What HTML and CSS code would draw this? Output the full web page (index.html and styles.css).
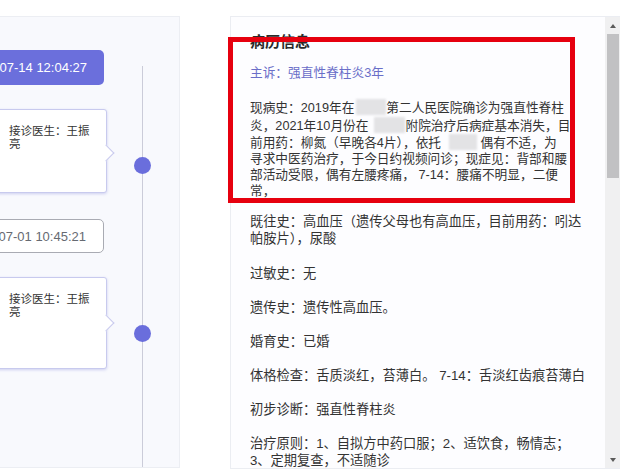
FILE: index.html
```html
<!DOCTYPE html>
<html lang="zh-CN">
<head>
<meta charset="utf-8">
<title>病历信息</title>
<link rel="stylesheet" href="styles.css">
</head>
<body>
<div class="page">
  <aside class="timeline-panel">
    <div class="events">
      <div class="pill pill-active">2021-07-14 12:04:27</div>
      <div class="card card-first">接诊医生：王振亮</div>
      <div class="pill pill-idle">2021-07-01 10:45:21</div>
      <div class="card card-second">接诊医生：王振亮</div>
    </div>
    <div class="rail">
      <span class="dot dot-first"></span>
      <span class="dot dot-second"></span>
    </div>
  </aside>

  <section class="record-panel">
    <div class="record-body">
      <h2 class="record-title">病历信息</h2>
      <p class="complaint">主诉：强直性脊柱炎3年</p>
      <p class="history">现病史：2019年在<span class="mask mask-a"></span>第二人民医院确诊为强直性脊柱<br>炎，2021年10月份在<span class="mask mask-b"></span>附院治疗后病症基本消失，目<br>前用药：柳氮（早晚各4片），依托<span class="mask mask-c"></span> 偶有不适，为<br>寻求中医药治疗，于今日约视频问诊；现症见：背部和腰<br>部活动受限，偶有左腰疼痛， 7-14：腰痛不明显，二便<br>常，</p>
      <p class="past">既往史：高血压（遗传父母也有高血压，目前用药：吲达<br>帕胺片），尿酸</p>
      <p class="allergy">过敏史：无</p>
      <p>遗传史：遗传性高血压。</p>
      <p>婚育史：已婚</p>
      <p>体格检查：舌质淡红，苔薄白。 7-14：舌淡红齿痕苔薄白</p>
      <p>初步诊断：强直性脊柱炎</p>
      <p>治疗原则：1、自拟方中药口服；2、适饮食，畅情志；<br>3、定期复查，不适随诊</p>
    </div>
    <div class="scrollbar">
      <div class="sb-btn"><span class="arrow-up"></span></div>
      <div class="sb-thumb"></div>
      <div class="sb-track"></div>
      <div class="sb-btn"><span class="arrow-down"></span></div>
    </div>
  </section>
</div>
<div class="highlight"></div>
</body>
</html>
```

FILE: styles.css
```css
* { box-sizing: border-box; }

html, body {
  margin: 0;
  padding: 0;
  background: #ffffff;
  overflow: hidden;
}

body {
  width: 640px;
  height: 472px;
  position: relative;
  font-family: "Liberation Sans", "Noto Sans CJK SC", sans-serif;
  color: #333;
}

.page {
  display: flex;
  align-items: flex-start;
  padding-top: 16px;
  gap: 50px;
}

/* ---------- left timeline ---------- */
.timeline-panel {
  margin-left: -60px;
  width: 240px;
  height: 452px;
  background: #f8f9fd;
  border: 1px solid #eceef3;
  display: flex;
  flex-shrink: 0;
}

.events {
  width: 166px;
  padding-top: 33px;
  display: flex;
  flex-direction: column;
  flex-shrink: 0;
}

.pill {
  width: 163px;
  border-radius: 5px;
  display: flex;
  align-items: center;
  justify-content: flex-end;
  padding-right: 17px;
  font-size: 13px;
  white-space: nowrap;
  overflow: hidden;
}

.pill-active {
  height: 35px;
  background: #6b6fdc;
  color: #ffffff;
}

.pill-idle {
  height: 34px;
  margin-top: 26px;
  background: #ffffff;
  border: 1px solid #a9abb3;
  color: #666a72;
}

.card {
  position: relative;
  width: 166px;
  background: #ffffff;
  border: 1px solid #c8caee;
  border-radius: 3px;
  box-shadow: 0 1px 3px rgba(96, 100, 210, 0.28);
  padding: 15px 9px 8px 67px;
  font-size: 11.5px;
  line-height: 13px;
  color: #333;
  margin-top: 24px;
}

.card-first { height: 84px; }
.card-second { height: 92px; padding-top: 15px; }

.card::after {
  content: "";
  position: absolute;
  right: -6px;
  width: 11px;
  height: 11px;
  background: #ffffff;
  border-top: 1px solid #c8caee;
  border-right: 1px solid #c8caee;
  transform: rotate(45deg);
}

.card-first::after { top: 37px; }
.card-second::after { top: 39px; }

.rail {
  width: 18px;
  margin-left: 26px;
  margin-top: 49px;
  display: flex;
  flex-direction: column;
  align-items: center;
  background: linear-gradient(#cbccd9, #cbccd9) center top / 1px 100% no-repeat;
}

.dot {
  display: block;
  width: 17px;
  height: 17px;
  border-radius: 50%;
  background: #6a6edc;
}

.dot-first { margin-top: 91px; }
.dot-second { margin-top: 151px; }

/* ---------- right record ---------- */
.record-panel {
  width: 390px;
  height: 453px;
  background: #fdfdff;
  border: 1px solid #ebedf2;
  border-right: none;
  display: flex;
  flex-shrink: 0;
}

.record-body {
  flex: 1;
  padding: 15px 0 0 19px;
  overflow: hidden;
  font-size: 13.25px;
  line-height: 17px;
  color: #333;
}

.record-title {
  margin: 0;
  font-size: 15px;
  line-height: 20px;
  font-weight: bold;
  color: #2a2a2a;
}

.record-body p {
  margin: 17px 0 0;
  white-space: nowrap;
}

.record-body .complaint {
  margin-top: 13px;
  font-size: 12.7px;
  color: #6a6ec8;
}

.record-body .history {
  margin-top: 17px;
  font-size: 12.7px;
  line-height: 15.7px;
}

.record-body .past { margin-top: 14px; }
.record-body .allergy { margin-top: 18px; }

.mask {
  display: inline-block;
  height: 16px;
  vertical-align: -3px;
  background: #e3e3e5;
  filter: blur(0.8px);
}

.mask-a { width: 30px; margin-left: 2px; }
.mask-b { width: 31px; margin-left: 6px; }
.mask-c { width: 28px; margin-left: 8px; }

.scrollbar {
  width: 15px;
  margin-left: 15px;
  background: #f0f0f1;
  display: flex;
  flex-direction: column;
  align-items: center;
}

.sb-btn {
  height: 17px;
  width: 15px;
  display: flex;
  align-items: center;
  justify-content: center;
  flex-shrink: 0;
}

.arrow-up {
  width: 0;
  height: 0;
  border-left: 3.5px solid transparent;
  border-right: 3.5px solid transparent;
  border-bottom: 4px solid #5a5a5a;
}

.arrow-down {
  width: 0;
  height: 0;
  border-left: 3.5px solid transparent;
  border-right: 3.5px solid transparent;
  border-top: 4px solid #5a5a5a;
}

.sb-thumb {
  width: 12px;
  height: 144px;
  background: #c1c1c3;
  flex-shrink: 0;
}

.sb-track { flex: 1; }

/* ---------- annotation overlay ---------- */
.highlight {
  position: absolute;
  left: 228px;
  top: 37px;
  width: 347px;
  height: 166px;
  border: 5px solid #e6000f;
  pointer-events: none;
}
```
